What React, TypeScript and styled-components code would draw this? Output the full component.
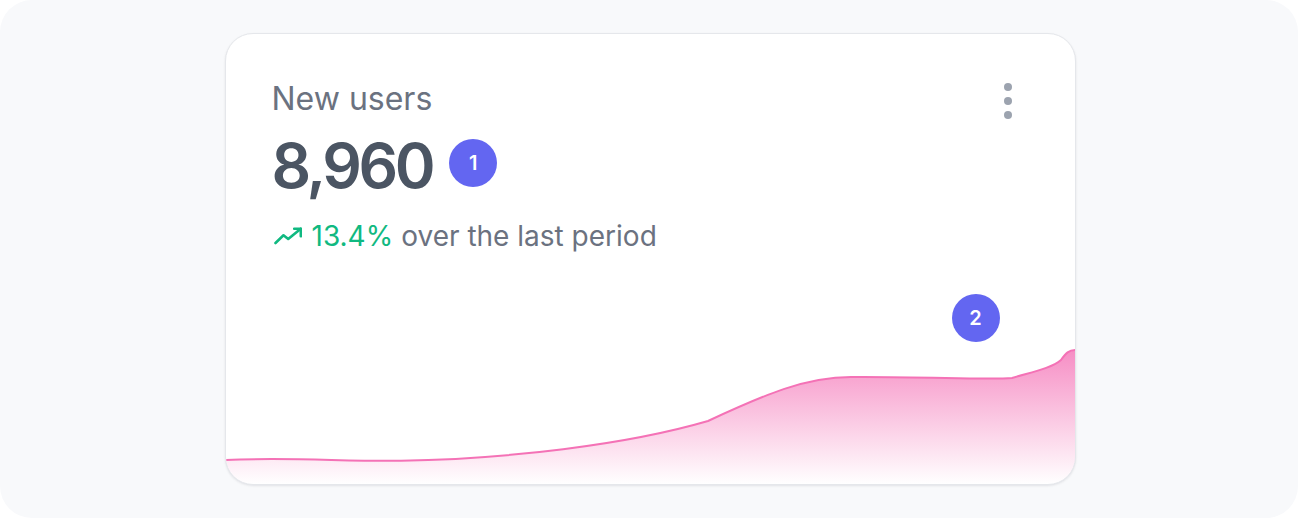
import React from "react";
import styled, { createGlobalStyle } from "styled-components";

const GlobalStyle = createGlobalStyle`
  html, body {
    margin: 0;
    padding: 0;
    background: #ffffff;
  }
  body {
    font-family: Inter, "Noto Sans", "Liberation Sans", sans-serif;
    -webkit-font-smoothing: antialiased;
  }
`;

// chart outline, in card pixels (card is 849 wide, chart 140 tall)
const LINE =
  "M0,116 C60,113 120,117.5 175,116.7 C280,115 400,101 482,77 C540,50 580,33 625,33 C700,32.5 760,36 786,34 C806,28 826,24 835,16 C840,9 843,6 849,6";

const App: React.FC = () => {
  return (
    <Frame>
      <GlobalStyle />
      <Card>
        <Body>
          <Header>
            <Title>New users</Title>
            <MenuButton aria-label="More">
              <svg width="8" height="36" viewBox="0 0 8 36">
                <circle cx="4" cy="4" r="4" />
                <circle cx="4" cy="18" r="4" />
                <circle cx="4" cy="32" r="4" />
              </svg>
            </MenuButton>
          </Header>

          <ValueRow>
            <Value>8,960</Value>
            <Badge $lift={6}>1</Badge>
          </ValueRow>

          <Trend>
            <TrendIcon viewBox="0 0 28 18" fill="none">
              <polyline points="1.5,16 9.5,8.3 14.2,12 26.8,1.7" />
              <polyline points="20.2,1.7 26.8,1.7 26.8,9.3" />
            </TrendIcon>
            <Rate>13.4%</Rate>
            <span>over the last period</span>
          </Trend>
        </Body>

        <Chart>
          {/* 注释标记 */}
          <ChartBadge>2</ChartBadge>
          <svg width="100%" height="140" viewBox="0 0 849 140" preserveAspectRatio="none">
            <defs>
              <linearGradient id="area" x1="0" y1="0" x2="0" y2="1">
                <stop offset="0%" stopColor="#f472b6" stopOpacity="0.8" />
                <stop offset="100%" stopColor="#f472b6" stopOpacity="0" />
              </linearGradient>
            </defs>
            <path d={`${LINE} L849,140 L0,140 Z`} fill="url(#area)" />
            <path d={LINE} fill="none" stroke="#f472b6" strokeWidth="2" />
          </svg>
        </Chart>
      </Card>
    </Frame>
  );
};

export default App;

const Frame = styled.div`
  width: 1298px;
  height: 518px;
  box-sizing: border-box;
  border-radius: 32px;
  background: #f8f9fb;
  display: flex;
  align-items: center;
  justify-content: center;
`;

const Card = styled.div`
  width: 851px;
  height: 452px;
  box-sizing: border-box;
  margin-left: 2px;
  background: #ffffff;
  border: 1px solid #e5e7eb;
  border-radius: 28px;
  box-shadow: 0 1px 3px rgb(15 23 42 / 6%), 0 1px 2px rgb(15 23 42 / 4%);
  overflow: hidden;
  display: flex;
  flex-direction: column;
`;

const Body = styled.div`
  padding: 43px 47px 0 46px;
`;

const Header = styled.div`
  display: flex;
  align-items: center;
  justify-content: space-between;
`;

const Title = styled.div`
  font-size: 32px;
  line-height: 38px;
  color: #6b7280;
  font-weight: 400;
`;

const MenuButton = styled.button`
  width: 40px;
  height: 40px;
  margin-top: 4px;
  padding: 0;
  border: none;
  background: transparent;
  display: flex;
  align-items: center;
  justify-content: center;
  cursor: pointer;

  svg {
    fill: #9ca3af;
  }
`;

const ValueRow = styled.div`
  margin-top: 9px;
  display: flex;
  align-items: center;
  gap: 17px;
`;

const Value = styled.div`
  font-size: 62px;
  line-height: 72px;
  font-weight: 600;
  color: #4b5563;
  letter-spacing: -3.4px;
`;

const Badge = styled.div<{ $lift?: number }>`
  width: 48px;
  height: 48px;
  border-radius: 50%;
  background: #6366f1;
  color: #ffffff;
  font-size: 20px;
  font-weight: 600;
  display: flex;
  align-items: center;
  justify-content: center;
  margin-bottom: ${p => p.$lift ?? 0}px;
`;

const Trend = styled.div`
  margin-top: 17px;
  display: flex;
  align-items: center;
  font-size: 28px;
  line-height: 34px;
  color: #6b7280;
`;

const TrendIcon = styled.svg`
  width: 28px;
  height: 18px;
  margin: 0 10px 1px 2px;
  stroke: #10b981;
  stroke-width: 2.6;
  stroke-linecap: round;
  stroke-linejoin: round;
`;

const Rate = styled.span`
  color: #10b981;
  margin-right: 8px;
`;

const Chart = styled.div`
  margin-top: auto;
  position: relative;
  height: 140px;
  display: flex;

  svg {
    display: block;
  }
`;

const ChartBadge = styled(Badge)`
  position: absolute;
  top: -50px;
  right: 75px;
`;
